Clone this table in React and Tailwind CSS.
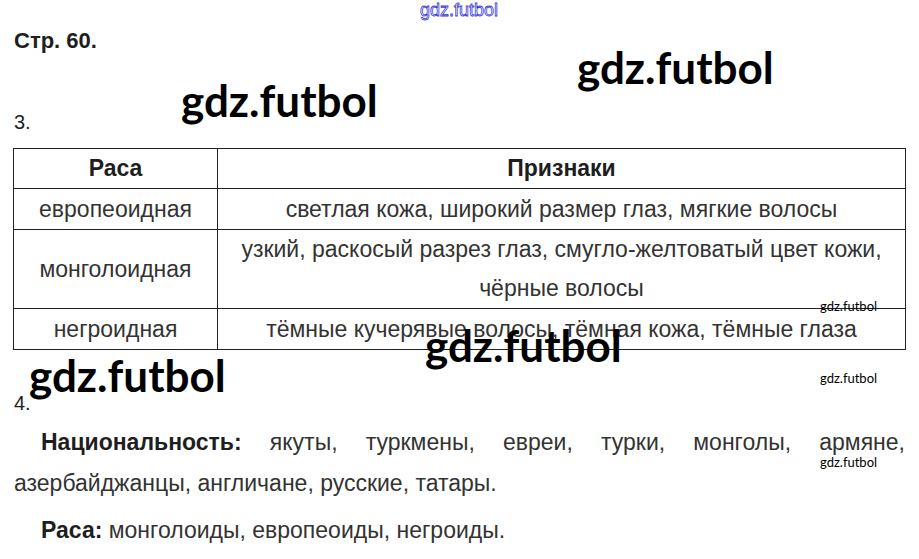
export default function App() {
  const rows = [
    { race: "европеоидная", signs: ["светлая кожа, широкий размер глаз, мягкие волосы"] },
    { race: "монголоидная", signs: ["узкий, раскосый разрез глаз, смугло-желтоватый цвет кожи,", "чёрные волосы"] },
    { race: "негроидная", signs: ["тёмные кучерявые волосы, тёмная кожа, тёмные глаза"] },
  ];

  const mark = "absolute font-['Lato',sans-serif] font-bold text-[44px] leading-none text-black";
  const smallMark = "absolute font-['Lato',sans-serif] text-[13px] leading-none text-black";

  return (
    <div className="relative w-[919px] h-[559px] overflow-hidden bg-white font-['Liberation_Sans',Arial,sans-serif] text-[#333]">
      <div className="absolute left-[420px] top-[1px] font-['Liberation_Sans',sans-serif] text-[18px] leading-none text-transparent [-webkit-text-stroke:0.8px_#3a3ad0]">
        gdz.futbol
      </div>

      <div className="flex flex-col px-[14px] pt-[29px]">
        <p className="text-[22px] font-bold leading-6 text-[#1e1e1e]">Стр. 60.</p>
        <p className="mt-[57px] text-[20px] leading-6 text-[#1e1e1e]">3.</p>

        <div className="mt-[14px] -ml-px grid w-[893px] grid-cols-[204px_1fr] border-t border-l border-[#222] text-center text-[23px] leading-[40px]">
          <div className="border-r border-b border-[#222] font-bold leading-[39px] text-[#1e1e1e]">Раса</div>
          <div className="border-r border-b border-[#222] font-bold leading-[39px] text-[#1e1e1e]">Признаки</div>
          {rows.map((r) => (
            <div key={r.race} className="contents">
              <div className="flex items-center justify-center border-r border-b border-[#222]">{r.race}</div>
              <div className={`flex flex-col border-r border-b border-[#222] ${r.signs.length > 1 ? "leading-[39px]" : ""}`}>
                {r.signs.map((s) => (
                  <span key={s}>{s}</span>
                ))}
              </div>
            </div>
          ))}
        </div>

        <p className="mt-[41px] text-[20px] leading-6 text-[#1e1e1e]">4.</p>

        <p className="mt-[7px] text-justify indent-[27px] text-[23px] leading-[41px]">
          <b className="text-[#1e1e1e]">Национальность:</b> якуты, туркмены, евреи, турки, монголы, армяне,
          азербайджанцы, англичане, русские, татары.
        </p>
        <p className="mt-[6px] indent-[27px] text-[23px] leading-[41px]">
          <b className="text-[#1e1e1e]">Раса:</b> монголоиды, европеоиды, негроиды.
        </p>
      </div>

      <div className={`${mark} left-[577px] top-[45px]`}>gdz.futbol</div>
      <div className={`${mark} left-[181px] top-[78px]`}>gdz.futbol</div>
      <div className={`${mark} left-[425px] top-[323px]`}>gdz.futbol</div>
      <div className={`${mark} left-[29px] top-[353px]`}>gdz.futbol</div>

      <div className={`${smallMark} left-[820px] top-[300px]`}>gdz.futbol</div>
      <div className={`${smallMark} left-[820px] top-[372px]`}>gdz.futbol</div>
      <div className={`${smallMark} left-[820px] top-[456px]`}>gdz.futbol</div>
    </div>
  );
}
